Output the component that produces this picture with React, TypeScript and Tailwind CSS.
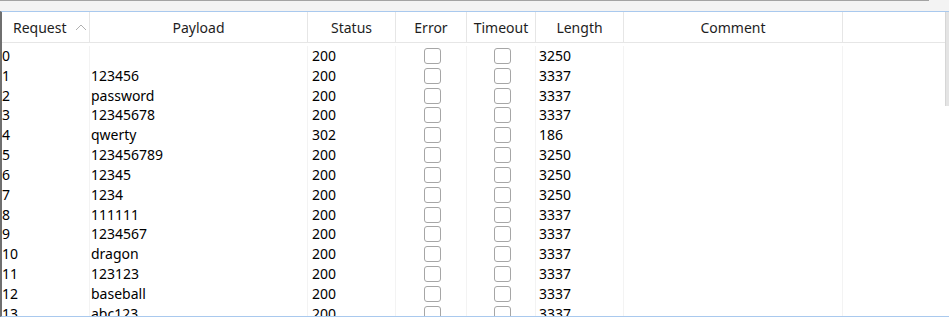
import React from "react";

const rows: [string, string, string, string][] = [
  ["0", "", "200", "3250"],
  ["1", "123456", "200", "3337"],
  ["2", "password", "200", "3337"],
  ["3", "12345678", "200", "3337"],
  ["4", "qwerty", "302", "186"],
  ["5", "123456789", "200", "3250"],
  ["6", "12345", "200", "3250"],
  ["7", "1234", "200", "3250"],
  ["8", "111111", "200", "3337"],
  ["9", "1234567", "200", "3337"],
  ["10", "dragon", "200", "3337"],
  ["11", "123123", "200", "3337"],
  ["12", "baseball", "200", "3337"],
  ["13", "abc123", "200", "3337"],
];

const cols = "grid grid-cols-[88px_218px_88px_71px_69px_88px_219px_1fr]";

const Box = () => (
  <div className="w-[17px] h-[16px] rounded-[3px] border border-[#a6a6a6] bg-white" />
);

const Head = ({ children, last }: { children?: React.ReactNode; last?: boolean }) => (
  <div className={`flex items-center justify-center h-full ${last ? "" : "border-r border-[#e6e6e6]"}`}>
    {children}
  </div>
);

const App = () => {
  return (
    <div
      className="w-[949px] h-[318px] overflow-hidden bg-white text-[14px] text-black flex flex-col"
      style={{ fontFamily: '"Noto Sans", "Open Sans", sans-serif' }}
    >
      {/* strip above the table */}
      <div className="h-[11px] bg-[#f3f3f3] shrink-0">
        <div className="w-[929px] h-[1px] bg-[#a3a3a3]" />
      </div>

      <div className="relative flex-1 min-h-0 border-t border-b border-[#a9c9ee] border-l-[2px] border-l-[#6f6f6f] overflow-hidden">
        {/* header */}
        <div className={`${cols} h-[31px] border-b border-[#e6e6e6] text-[#1e1e1e]`}>
          <div className="flex items-center h-full pl-[11px] border-r border-[#e6e6e6]">
            <span>Request</span>
            <svg width="12" height="8" viewBox="0 0 12 8" className="ml-[8px]">
              <polyline points="1,7 6,2 11,7" fill="none" stroke="#b0b0b0" strokeWidth="1" />
            </svg>
          </div>
          <Head>Payload</Head>
          <Head>Status</Head>
          <Head>Error</Head>
          <Head>Timeout</Head>
          <Head>Length</Head>
          <Head>Comment</Head>
          <Head last />
        </div>

        {/* body */}
        <div className="pt-[3px] leading-none">
          {rows.map(([req, payload, status, length]) => (
            <div key={req} className={`${cols} h-[19.83px]`}>
              <div className="flex items-center border-r border-[#f3f3f3]">{req}</div>
              <div className="flex items-center pl-[1px] border-r border-[#f3f3f3]">{payload}</div>
              <div className="flex items-center pl-[4px] border-r border-[#f3f3f3]">{status}</div>
              <div className="flex items-center justify-center pl-[2px] border-r border-[#f3f3f3]"><Box /></div>
              <div className="flex items-center justify-center pl-[3px] border-r border-[#f3f3f3]"><Box /></div>
              <div className="flex items-center pl-[3px] border-r border-[#f3f3f3]">{length}</div>
              <div className="border-r border-[#f3f3f3]" />
              <div />
            </div>
          ))}
        </div>

        {/* scrollbar thumb */}
        <div className="absolute right-0 top-0 w-[4px] h-[94px] bg-[#e4e4e4] border-l border-[#d6d6d6]" />
      </div>
      <div className="h-[1px] shrink-0" />
    </div>
  );
};

export default App;
